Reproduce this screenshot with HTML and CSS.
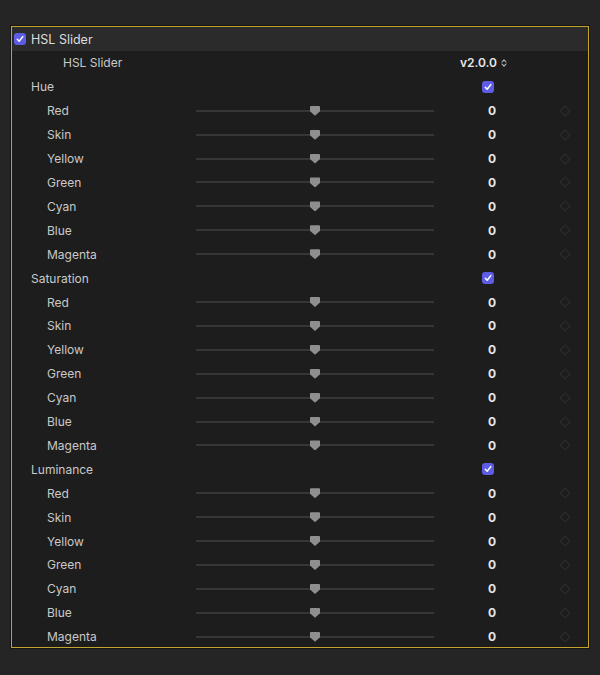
FILE: index.html
```html
<!DOCTYPE html>
<html>
<head>
<meta charset="utf-8">
<link rel="stylesheet" href="styles.css">
</head>
<body>
<div class="panel">
  <div class="header">
    <span class="cb"><svg viewBox="0 0 12 12" width="12" height="12"><path d="M3.3 6.3 L5.2 8.3 L8.8 3.6" fill="none" stroke="#fff" stroke-width="1.5" stroke-linecap="round" stroke-linejoin="round"/></svg></span>
    <span class="htitle">HSL Slider</span>
  </div>
  <div class="row">
    <span class="label l2">HSL Slider</span>
    <span class="track-empty"></span>
    <span class="version">v2.0.0 <svg class="stepper" viewBox="0 0 6 10" width="6" height="10"><path d="M1 4 L3 1.8 L5 4 M1 6 L3 8.2 L5 6" fill="none" stroke="#bdbdbd" stroke-width="1.1" stroke-linecap="round" stroke-linejoin="round"/></svg></span>
  </div>

  <div class="row">
    <span class="label l0">Hue</span><span class="track-empty"></span>
    <span class="gcheck"><span class="cb"><svg viewBox="0 0 12 12" width="12" height="12"><path d="M3.3 6.3 L5.2 8.3 L8.8 3.6" fill="none" stroke="#fff" stroke-width="1.5" stroke-linecap="round" stroke-linejoin="round"/></svg></span></span>
  </div>
  <div class="row"><span class="label l1">Red</span><span class="slider"><i class="thumb"></i></span><span class="val">0</span><span class="kf"></span></div>
  <div class="row"><span class="label l1">Skin</span><span class="slider"><i class="thumb"></i></span><span class="val">0</span><span class="kf"></span></div>
  <div class="row"><span class="label l1">Yellow</span><span class="slider"><i class="thumb"></i></span><span class="val">0</span><span class="kf"></span></div>
  <div class="row"><span class="label l1">Green</span><span class="slider"><i class="thumb"></i></span><span class="val">0</span><span class="kf"></span></div>
  <div class="row"><span class="label l1">Cyan</span><span class="slider"><i class="thumb"></i></span><span class="val">0</span><span class="kf"></span></div>
  <div class="row"><span class="label l1">Blue</span><span class="slider"><i class="thumb"></i></span><span class="val">0</span><span class="kf"></span></div>
  <div class="row"><span class="label l1">Magenta</span><span class="slider"><i class="thumb"></i></span><span class="val">0</span><span class="kf"></span></div>

  <div class="row">
    <span class="label l0">Saturation</span><span class="track-empty"></span>
    <span class="gcheck"><span class="cb"><svg viewBox="0 0 12 12" width="12" height="12"><path d="M3.3 6.3 L5.2 8.3 L8.8 3.6" fill="none" stroke="#fff" stroke-width="1.5" stroke-linecap="round" stroke-linejoin="round"/></svg></span></span>
  </div>
  <div class="row"><span class="label l1">Red</span><span class="slider"><i class="thumb"></i></span><span class="val">0</span><span class="kf"></span></div>
  <div class="row"><span class="label l1">Skin</span><span class="slider"><i class="thumb"></i></span><span class="val">0</span><span class="kf"></span></div>
  <div class="row"><span class="label l1">Yellow</span><span class="slider"><i class="thumb"></i></span><span class="val">0</span><span class="kf"></span></div>
  <div class="row"><span class="label l1">Green</span><span class="slider"><i class="thumb"></i></span><span class="val">0</span><span class="kf"></span></div>
  <div class="row"><span class="label l1">Cyan</span><span class="slider"><i class="thumb"></i></span><span class="val">0</span><span class="kf"></span></div>
  <div class="row"><span class="label l1">Blue</span><span class="slider"><i class="thumb"></i></span><span class="val">0</span><span class="kf"></span></div>
  <div class="row"><span class="label l1">Magenta</span><span class="slider"><i class="thumb"></i></span><span class="val">0</span><span class="kf"></span></div>

  <div class="row">
    <span class="label l0">Luminance</span><span class="track-empty"></span>
    <span class="gcheck"><span class="cb"><svg viewBox="0 0 12 12" width="12" height="12"><path d="M3.3 6.3 L5.2 8.3 L8.8 3.6" fill="none" stroke="#fff" stroke-width="1.5" stroke-linecap="round" stroke-linejoin="round"/></svg></span></span>
  </div>
  <div class="row"><span class="label l1">Red</span><span class="slider"><i class="thumb"></i></span><span class="val">0</span><span class="kf"></span></div>
  <div class="row"><span class="label l1">Skin</span><span class="slider"><i class="thumb"></i></span><span class="val">0</span><span class="kf"></span></div>
  <div class="row"><span class="label l1">Yellow</span><span class="slider"><i class="thumb"></i></span><span class="val">0</span><span class="kf"></span></div>
  <div class="row"><span class="label l1">Green</span><span class="slider"><i class="thumb"></i></span><span class="val">0</span><span class="kf"></span></div>
  <div class="row"><span class="label l1">Cyan</span><span class="slider"><i class="thumb"></i></span><span class="val">0</span><span class="kf"></span></div>
  <div class="row"><span class="label l1">Blue</span><span class="slider"><i class="thumb"></i></span><span class="val">0</span><span class="kf"></span></div>
  <div class="row"><span class="label l1">Magenta</span><span class="slider"><i class="thumb"></i></span><span class="val">0</span><span class="kf"></span></div>
</div>
</body>
</html>
```

FILE: styles.css
```css
html, body {
  margin: 0;
  padding: 0;
  background: #252525;
  width: 600px;
  height: 675px;
  overflow: hidden;
  font-family: Inter, "Liberation Sans", sans-serif;
  font-size: 12px;
  color: #c9c9c9;
}

.panel {
  margin: 26px 0 0 11px;
  width: 576px;
  height: 620px;
  overflow: hidden;
  border: 1px solid #c4a52c;
  background: #1d1d1d;
  box-shadow: 0 0 0 1px #141414;
}

.header {
  height: 24px;
  background: #2b2b2b;
  display: flex;
  align-items: center;
  padding-left: 2px;
  gap: 5px;
}

.htitle {
  color: #dcdcdc;
  font-size: 12.5px;
}

.cb {
  width: 12px;
  height: 12px;
  border-radius: 3px;
  background: #5d5ce4;
  display: inline-flex;
}

.row {
  height: 23.92px;
  display: grid;
  grid-template-columns: 184px 238px 62px 1fr;
  align-items: center;
}

.label { white-space: nowrap; }
.l0 { padding-left: 19px; }
.l1 { padding-left: 35px; }
.l2 { padding-left: 51px; }

.slider {
  position: relative;
  height: 2px;
  background: #363636;
}

.thumb {
  position: absolute;
  left: 114px;
  top: -4px;
  width: 10px;
  height: 10px;
  background: #8f8f8f;
  clip-path: polygon(0 0, 100% 0, 100% 55%, 50% 100%, 0 55%);
  border-radius: 1px;
}

.val {
  text-align: right;
  font-weight: 700;
  color: #e6e6e6;
}

.kf {
  width: 6px;
  height: 6px;
  margin-left: 65px;
  border: 1px solid #2e2e2e;
  transform: rotate(45deg);
}

.version {
  grid-column: 3 / 5;
  padding-left: 26px;
  font-weight: 600;
  color: #e6e6e6;
  display: flex;
  align-items: center;
  gap: 2px;
}

.stepper { margin-left: 2px; }

.gcheck {
  display: flex;
  justify-content: flex-end;
  padding-right: 2px;
}
```
